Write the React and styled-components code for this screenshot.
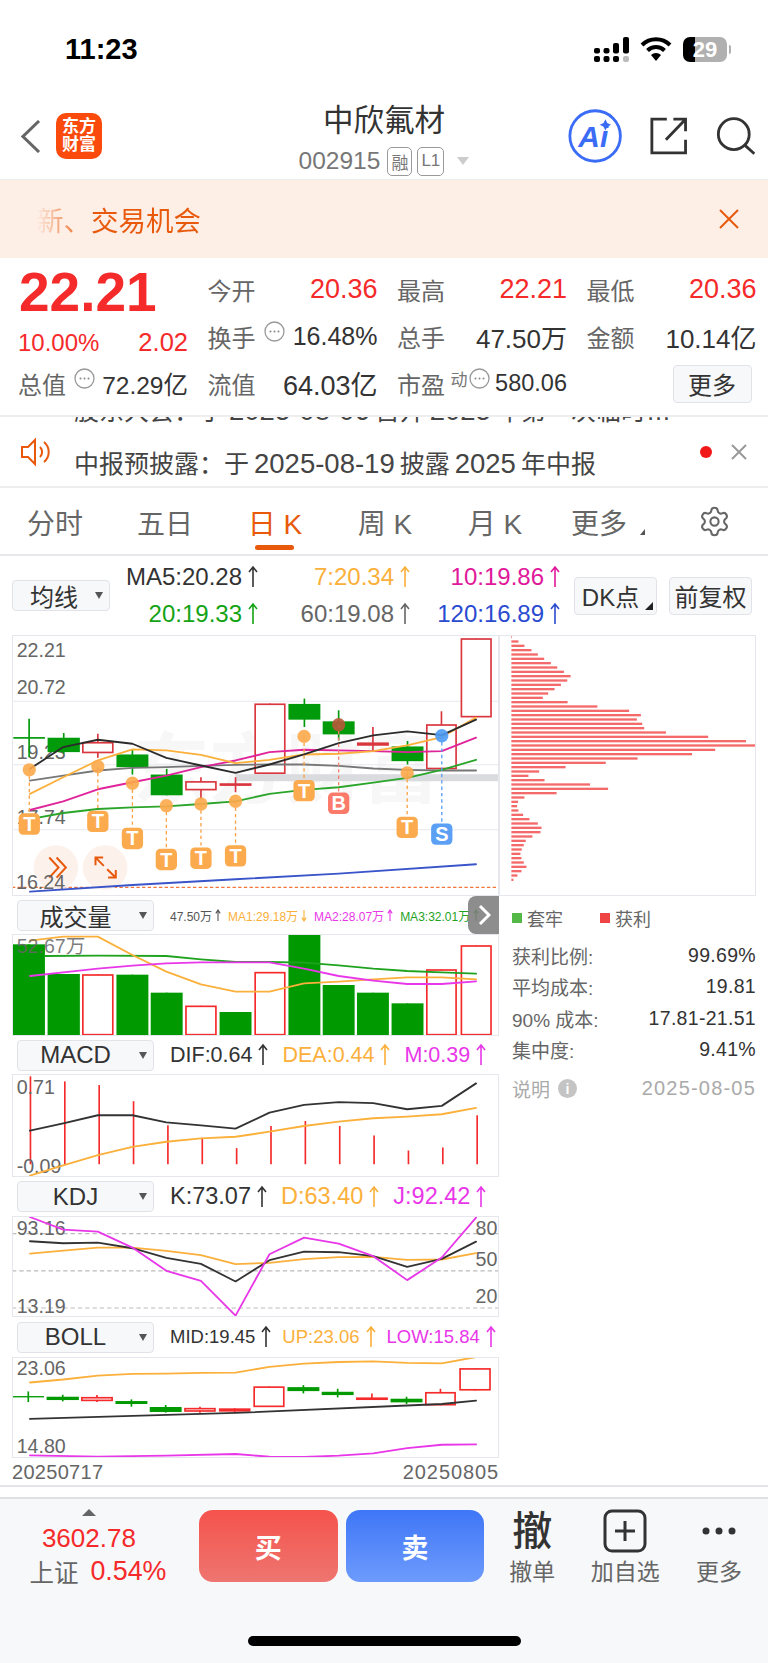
import React from "react";
import styled, { createGlobalStyle } from "styled-components";
import { Settings } from "lucide-react";

const RED = "#f52a2a";
const CANDLE_RED = "#d9363e";
const GREEN = "#009a0a";
const ORANGE = "#e8590c";
const AMBER = "#fbb03b";
const MAGENTA = "#e837e8";
const FONT = '"Liberation Sans", "Noto Sans CJK SC", sans-serif';

const GlobalStyle = createGlobalStyle`
  html, body { margin: 0; padding: 0; background: #fff; }
  body { font-family: ${FONT}; color: #333; }
  * { box-sizing: border-box; }
`;

const Page = styled.div`
  width: 768px;
  height: 1663px;
  display: flex;
  flex-direction: column;
  overflow: hidden;
  background: #fff;
`;

/* status bar */
const StatusBar = styled.div`
  height: 90px;
  padding: 8px 41px 0 65px;
  display: flex;
  align-items: center;
  justify-content: space-between;
`;
const Clock = styled.div`
  font-size: 29px;
  font-weight: 700;
  color: #000;
`;
const StatusIcons = styled.div`
  display: flex;
  align-items: center;
  gap: 11px;
`;
const Battery = styled.div`
  position: relative;
  width: 44px;
  height: 25px;
  border-radius: 7px;
  background: linear-gradient(90deg, #000 0, #000 27%, #b0b0b0 27%, #b0b0b0 100%);
  color: #fff;
  font-size: 22px;
  font-weight: 700;
  line-height: 25px;
  text-align: center;
  &::after {
    content: "";
    position: absolute;
    right: -4px;
    top: 8px;
    width: 2px;
    height: 9px;
    border-radius: 0 2px 2px 0;
    background: #b0b0b0;
  }
`;

/* header */
const Header = styled.div`
  height: 89px;
  display: flex;
  align-items: flex-start;
`;
const HeaderSide = styled.div`
  width: 200px;
  height: 100%;
  display: flex;
  align-items: center;
  justify-content: ${(p) => (p.$right ? "flex-end" : "flex-start")};
  gap: ${(p) => (p.$right ? "28px" : "15px")};
  padding: ${(p) => (p.$right ? "3px 13px 0 0" : "3px 0 0 21px")};
`;
const HeaderCenter = styled.div`
  flex: 1;
  display: flex;
  flex-direction: column;
  align-items: center;
  padding-top: 12px;
`;
const Title = styled.div`
  font-size: 30.5px;
  line-height: 36px;
  color: #333;
`;
const CodeRow = styled.div`
  display: flex;
  align-items: center;
  margin-top: 7px;
  height: 32px;
  color: #777;
  font-size: 24.5px;
`;
const CodeTag = styled.span`
  width: ${(p) => p.$w}px;
  height: 29px;
  margin-left: ${(p) => p.$ml}px;
  border: 1px solid #999;
  border-radius: 5px;
  font-size: 17px;
  color: #777;
  display: flex;
  align-items: center;
  justify-content: center;
`;
const Caret = styled.span`
  margin-left: 13px;
  border-left: 6px solid transparent;
  border-right: 6px solid transparent;
  border-top: 8px solid #ccc;
`;
const Logo = styled.div`
  width: 46px;
  height: 46px;
  border-radius: 10px;
  background: #fa4b0c;
  color: #fff;
  font-size: 17px;
  font-weight: 700;
  line-height: 18px;
  text-align: center;
  padding-top: 5px;
`;

/* banner */
const Banner = styled.div`
  height: 79px;
  border-top: 1px solid #eee;
  background: #fdeee6;
  display: flex;
  align-items: center;
  justify-content: space-between;
  padding: 0 28px 0 36px;
`;
const BannerText = styled.span`
  font-size: 27.5px;
  background: linear-gradient(90deg, #fdeee6 0, ${ORANGE} 52px);
  -webkit-background-clip: text;
  background-clip: text;
  color: transparent;
`;

/* stats */
const Stats = styled.div`
  height: 159px;
  padding: 8px 0 0 18px;
  display: grid;
  grid-template-columns: repeat(4, 170px);
  grid-auto-rows: 47px;
  column-gap: 19.5px;
  border-bottom: 2px solid #eee;
`;
const Price = styled.div`
  font-size: 55px;
  font-weight: 700;
  color: ${RED};
  line-height: 52px;
  margin-left: 1px;
`;
const Cell = styled.div`
  display: flex;
  align-items: center;
  justify-content: space-between;
  padding-top: ${(p) => p.$pt || 0}px;
`;
const StatLabel = styled.span`
  font-size: 24px;
  color: #666;
`;
const StatValue = styled.span`
  font-size: ${(p) => p.$size || 27}px;
  color: ${(p) => (p.$red ? RED : "#333")};
`;
const Hint = styled.span`
  display: flex;
  align-items: center;
  gap: 1px;
  margin-top: -10px;
  color: #777;
  font-size: 17px;
`;
const MoreButton = styled.div`
  width: 79px;
  height: 38px;
  margin: 0 5px 0 auto;
  border: 1px solid #e2e3e8;
  border-radius: 4px;
  background: #f7f8fa;
  font-size: 24px;
  color: #333;
  display: flex;
  align-items: center;
  justify-content: center;
`;

/* ticker */
const Ticker = styled.div`
  height: 71px;
  border-bottom: 2px solid #eee;
  display: flex;
  padding-left: 20px;
`;
const TickerBody = styled.div`
  margin-left: 22px;
  width: 626px;
  font-size: 25px;
  color: #444;
`;
const ClippedLine = styled.div`
  height: 8px;
  overflow: hidden;
  white-space: nowrap;
  line-height: 30px;
  & > span {
    display: block;
    margin-top: -21px;
  }
`;
const NoticeLine = styled.div`
  margin-top: 23px;
  line-height: 32px;
  white-space: nowrap;
`;
const Num = styled.span`
  font-size: 27.5px;
  margin: 0 5px;
`;
const TickerTools = styled.div`
  display: flex;
  align-items: center;
  gap: 19px;
  height: 70px;
`;
const RedDot = styled.span`
  width: 12px;
  height: 12px;
  border-radius: 50%;
  background: #f01818;
`;

/* period tabs */
const Tabs = styled.div`
  height: 68px;
  border-bottom: 2px solid #e8e8ec;
  display: flex;
  align-items: center;
`;
const Tab = styled.div`
  position: relative;
  width: 110px;
  height: 100%;
  font-size: 28px;
  color: ${(p) => (p.$active ? ORANGE : "#666")};
  display: flex;
  align-items: center;
  justify-content: center;
  padding: 1px ${(p) => p.$pr || 0}px 0 0;
  &::after {
    content: "";
    display: ${(p) => (p.$active ? "block" : "none")};
    position: absolute;
    left: 35px;
    bottom: 4px;
    width: 39px;
    height: 5px;
    border-radius: 3px;
    background: ${ORANGE};
  }
`;
const MoreCorner = styled.span`
  position: absolute;
  right: 15px;
  top: 41px;
  border-left: 5px solid transparent;
  border-bottom: 6px solid #555;
`;
const GearBox = styled.div`
  flex: 1;
  display: flex;
  justify-content: center;
  color: #666;
`;

/* chart area */
const ChartArea = styled.div`
  height: 931px;
  padding-left: 12px;
  border-bottom: 2px solid #e4e5e9;
`;
const MaBar = styled.div`
  height: 79px;
  display: flex;
  align-items: center;
`;
const Select = styled.div`
  position: relative;
  flex: none;
  width: ${(p) => p.$w}px;
  height: 31px;
  margin-left: ${(p) => p.$ml || 0}px;
  border: 1px solid #e2e3e8;
  border-radius: 4px;
  background: #f7f8fa;
  font-size: 24px;
  color: #333;
  padding-right: ${(p) => p.$pr}px;
  display: flex;
  align-items: center;
  justify-content: center;
  &::after {
    content: "";
    position: absolute;
    right: 6px;
    top: 11px;
    border-left: 4.5px solid transparent;
    border-right: 4.5px solid transparent;
    border-top: 7px solid #555;
  }
`;
const MaGrid = styled.div`
  margin-left: 14px;
  display: grid;
  grid-template-columns: 134px 152px 150px;
  grid-auto-rows: 37px;
  align-items: center;
  justify-items: end;
`;
const Reading = styled.span`
  display: inline-flex;
  align-items: center;
  gap: 6px;
  white-space: nowrap;
  font-size: ${(p) => p.$size || 24}px;
  color: ${(p) => p.$color || "#333"};
`;
const ToolButton = styled.div`
  position: relative;
  width: 83px;
  height: 38px;
  margin-left: ${(p) => p.$ml}px;
  padding-right: ${(p) => (p.$corner ? 10 : 0)}px;
  border: 1px solid #e2e3e8;
  border-radius: 4px;
  background: #f7f8fa;
  font-size: 24px;
  color: #333;
  display: flex;
  align-items: center;
  justify-content: center;
  &::after {
    content: "";
    display: ${(p) => (p.$corner ? "block" : "none")};
    position: absolute;
    right: 3px;
    bottom: 4px;
    border-left: 8px solid transparent;
    border-bottom: 8px solid #222;
  }
`;
const ChartBody = styled.div`
  display: flex;
`;
const LeftColumn = styled.div`
  width: 487px;
`;
const RightColumn = styled.div`
  width: 257px;
`;
const Panel = styled.div`
  height: ${(p) => p.$h}px;
  outline: 1px solid #e6e7ec;
  outline-offset: -1px;
`;
const ChartSvg = styled.svg`
  display: block;
  width: 100%;
  height: 100%;
  overflow: hidden;
`;
const AxisText = styled.text`
  font-family: ${FONT};
  font-size: 59px;
  fill: #666;
`;
const BadgeText = styled.text`
  font-family: ${FONT};
  font-size: 60px;
  font-weight: 700;
  fill: #fff;
  text-anchor: middle;
`;
const Watermark = styled.text`
  font-family: ${FONT};
  font-size: 230px;
  font-weight: 700;
  fill: #f7f7f8;
`;
const IndicatorBar = styled.div`
  position: relative;
  height: ${(p) => p.$h}px;
  display: flex;
  align-items: center;
  gap: ${(p) => p.$gap}px;
  white-space: nowrap;
  overflow: hidden;
`;
const Handle = styled.div`
  position: absolute;
  right: 0;
  top: 0;
  width: 31px;
  height: 38px;
  border-radius: 8px 0 0 8px;
  background: rgba(125, 125, 125, 0.88);
  display: flex;
  align-items: center;
  justify-content: center;
`;
const DateRow = styled.div`
  height: 29px;
  display: flex;
  align-items: center;
  justify-content: space-between;
  font-size: 20px;
  color: #666;
`;
const DateText = styled.span`
  letter-spacing: ${(p) => p.$ls}px;
`;

/* chip column */
const Legend = styled.div`
  height: 44px;
  padding-left: 13px;
  display: flex;
  align-items: center;
  gap: 5px;
  font-size: 18px;
  color: #666;
`;
const Swatch = styled.span`
  width: 10px;
  height: 10px;
  margin-left: ${(p) => p.$ml || 0}px;
  background: ${(p) => p.$color};
`;
const ChipRow = styled.div`
  height: 31.3px;
  padding-left: 13px;
  display: flex;
  align-items: center;
  justify-content: space-between;
  font-size: 19px;
  color: #666;
`;
const ChipValue = styled.span`
  font-size: ${(p) => (p.$muted ? 20 : 19.5)}px;
  letter-spacing: ${(p) => (p.$muted ? 1.2 : 0.3)}px;
  color: ${(p) => (p.$muted ? "#aaa" : "#333")};
`;
const NoteRow = styled(ChipRow)`
  margin-top: 8px;
  color: #aaa;
`;
const NoteLabel = styled.span`
  display: flex;
  align-items: center;
  gap: 8px;
`;
const InfoDot = styled.span`
  width: 19px;
  height: 19px;
  border-radius: 50%;
  background: #c4c4c4;
  color: #fff;
  font-size: 14px;
  font-weight: 700;
  display: flex;
  align-items: center;
  justify-content: center;
`;

/* bottom bar */
const Strip = styled.div`
  height: 12px;
  flex: none;
  border-bottom: 2px solid #e0e1e6;
`;
const BottomBar = styled.div`
  flex: 1;
  background: #f7f8fa;
  display: flex;
  flex-direction: column;
`;
const BottomRow = styled.div`
  display: flex;
  align-items: flex-start;
  padding-top: 10px;
`;
const Quote = styled.div`
  width: 178px;
  margin-right: 21px;
  display: flex;
  flex-direction: column;
  align-items: center;
`;
const QuoteCaret = styled.span`
  border-left: 7px solid transparent;
  border-right: 7px solid transparent;
  border-bottom: 7px solid #666;
`;
const QuoteNumber = styled.div`
  margin-top: 7px;
  font-size: 26px;
  line-height: 30px;
  color: ${RED};
`;
const QuoteLine = styled.div`
  display: flex;
  align-items: center;
  gap: 12px;
  height: 36px;
  margin-left: 18px;
  font-size: 24.5px;
  color: #666;
`;
const QuoteChange = styled.span`
  font-size: 26.8px;
  color: ${RED};
`;
const TradeButton = styled.div`
  width: 139px;
  height: 72px;
  margin: 1px 8px 0 0;
  border-radius: 14px;
  background: linear-gradient(180deg, ${(p) => p.$from}, ${(p) => p.$to});
  color: #fff;
  font-size: 27px;
  font-weight: 700;
  display: flex;
  align-items: center;
  justify-content: center;
`;
const Tool = styled.div`
  width: ${(p) => p.$w}px;
  margin-left: ${(p) => p.$ml || 0}px;
  display: flex;
  flex-direction: column;
  align-items: center;
  font-size: 23px;
  color: #666;
`;
const ToolGlyph = styled.div`
  height: 44px;
  display: flex;
  align-items: center;
  justify-content: center;
  font-size: 40px;
  font-weight: 500;
  color: #333;
`;
const CancelGlyph = styled.span`
  margin-top: -7px;
`;
const ToolLabel = styled.div`
  margin-top: 4px;
  line-height: 30px;
`;
const HomeIndicator = styled.div`
  width: 273px;
  height: 10px;
  margin: auto auto 17px;
  border-radius: 5px;
  background: #000;
`;

const Arrow = ({ down }) => (
  <svg width="10" height="24" viewBox="0 0 10 24" fill="none" stroke="currentColor" strokeWidth="1.6">
    {down ? (
      <path d="M5 2 V22 M1 17 L5 22 L9 17" />
    ) : (
      <path d="M5 22 V2 M1 7 L5 2 L9 7" />
    )}
  </svg>
);

const SmallArrow = ({ down }) => (
  <svg width="6" height="13" viewBox="0 0 10 24" fill="none" stroke="currentColor" strokeWidth="2">
    {down ? <path d="M5 2 V22 M1 16 L5 22 L9 16" /> : <path d="M5 22 V2 M1 8 L5 2 L9 8" />}
  </svg>
);

const DotCircle = () => (
  <svg width="21" height="21" viewBox="0 0 21 21" fill="none">
    <circle cx="10.5" cy="10.5" r="9.5" stroke="#999" strokeWidth="1.3" />
    <circle cx="6.5" cy="10.5" r="1" fill="#888" />
    <circle cx="10.5" cy="10.5" r="1" fill="#888" />
    <circle cx="14.5" cy="10.5" r="1" fill="#888" />
  </svg>
);

const Line = ({ pts, color, w = 5.5, dash }) => (
  <polyline
    points={pts.map((p) => p.join(",")).join(" ")}
    fill="none"
    stroke={color}
    strokeWidth={w}
    strokeLinejoin="round"
    strokeLinecap="round"
    strokeDasharray={dash}
  />
);

const Candle = ({ c, red = CANDLE_RED, green = GREEN }) => {
  const [x0, x1, top, bottom, wt, wb, kind] = c;
  const color = kind === "g" ? green : red;
  const cx = (x0 + x1) / 2;
  const hollow = kind === "h";
  return (
    <g>
      <line x1={cx} x2={cx} y1={wt} y2={wb} stroke={color} strokeWidth="5" />
      <rect
        x={hollow ? x0 + 2 : x0}
        y={hollow ? top + 2 : top}
        width={hollow ? x1 - x0 - 4 : x1 - x0}
        height={hollow ? bottom - top - 4 : bottom - top}
        fill={hollow ? "#fff" : color}
        stroke={hollow ? color : "none"}
        strokeWidth={hollow ? 5 : 0}
      />
    </g>
  );
};

const Marker = ({ x, cy, by, letter, color, ball, stem }) => (
  <g>
    <line x1={x} x2={x} y1={cy} y2={by} stroke={stem} strokeWidth="4" strokeDasharray="10 9" />
    <circle cx={x} cy={cy} r="20" fill={ball} fillOpacity="0.9" />
    <rect x={x - 32} y={by - 32} width="64" height="64" rx="14" fill={color} />
    <BadgeText x={x} y={by + 21}>{letter}</BadgeText>
  </g>
);

const mainCandles = [
  [40, 135, 530, 535, 475, 590, "g"],
  [143, 240, 532, 575, 518, 580, "g"],
  [247, 341, 545, 578, 520, 592, "h"],
  [350, 446, 582, 620, 568, 642, "g"],
  [453, 549, 642, 704, 625, 704, "g"],
  [557, 651, 662, 689, 650, 715, "h"],
  [660, 756, 668, 676, 650, 695, "r"],
  [765, 858, 430, 640, 430, 640, "h"],
  [867, 963, 431, 478, 415, 500, "g"],
  [970, 1066, 483, 522, 450, 540, "g"],
  [1073, 1169, 546, 556, 500, 570, "r"],
  [1177, 1273, 558, 602, 542, 612, "g"],
  [1281, 1373, 492, 626, 453, 626, "h"],
  [1385, 1478, 235, 471, 235, 471, "h"],
];

const xs = [90, 190, 294, 398, 500, 604, 708, 810, 914, 1018, 1122, 1224, 1328, 1431];
const zip = (ys) => ys.map((y, i) => [xs[i], y]);

const mainLines = [
  { color: "#777", ys: [660, 645, 630, 622, 620, 616, 613, 612, 612, 616, 624, 628, 630, 630] },
  { color: "#2aa52a", ys: [775, 757, 745, 740, 737, 730, 722, 700, 688, 680, 666, 652, 628, 598] },
  { color: "#e0249a", ys: [748, 722, 686, 665, 645, 620, 600, 575, 568, 570, 572, 575, 572, 532] },
  { color: AMBER, ys: [700, 650, 600, 567, 570, 583, 608, 598, 582, 580, 572, 555, 530, 472] },
  { color: "#2b2b2b", ys: [625, 560, 538, 550, 592, 615, 637, 612, 582, 548, 525, 513, 524, 478] },
];

const T = { letter: "T", color: "#fcaa4e", ball: "#fca94a", stem: "#fba344" };
const markers = [
  { x: 88, cy: 628, by: 790, ...T },
  { x: 294, cy: 618, by: 782, ...T },
  { x: 398, cy: 668, by: 833, ...T },
  { x: 500, cy: 735, by: 896, ...T },
  { x: 604, cy: 730, by: 892, ...T },
  { x: 708, cy: 722, by: 885, ...T },
  { x: 914, cy: 528, by: 690, ...T },
  { x: 1018, cy: 493, by: 728, letter: "B", color: "#fb7a6a", ball: "#b8583a", stem: "#f5816f" },
  { x: 1224, cy: 637, by: 800, ...T },
  { x: 1328, cy: 526, by: 820, letter: "S", color: "#5ba0f5", ball: "#4d9bf5", stem: "#5ba0f5" },
];

const MainChart = () => (
  <ChartSvg viewBox="36 225 1464 780" preserveAspectRatio="none">
    <Watermark x="400" y="710">东方财富</Watermark>
    {[423, 613, 807].map((y) => (
      <line key={y} x1="36" x2="1500" y1={y} y2={y} stroke="#e8e8ee" strokeWidth="3" />
    ))}
    <rect x="708" y="641" width="792" height="21" fill="#d9dbdf" />
    <AxisText x="50" y="290">22.21</AxisText>
    <AxisText x="50" y="402">20.72</AxisText>
    <AxisText x="50" y="597">19.23</AxisText>
    <AxisText x="50" y="790">17.74</AxisText>
    {mainCandles.map((c, i) => <Candle key={i} c={c} />)}
    {mainLines.map((l) => <Line key={l.color} pts={zip(l.ys)} color={l.color} />)}
    <line x1="36" x2="1500" y1="979" y2="979" stroke="#f4743a" strokeWidth="4" strokeDasharray="10 7" />
    {markers.map((m) => <Marker key={m.x} {...m} />)}
    <circle cx="168" cy="920" r="67" fill="#fdf0ea" fillOpacity="0.92" />
    <circle cx="316" cy="920" r="67" fill="#fdf0ea" fillOpacity="0.92" />
    <path d="M148 890 L176 920 L148 950 M170 890 L198 920 L170 950" fill="none" stroke={ORANGE} strokeWidth="6" />
    <path d="M287 913 V890 H310 M288 891 L312 915 M348 927 V950 H325 M347 949 L322 925" fill="none" stroke={ORANGE} strokeWidth="6" />
    <AxisText x="48" y="985">16.24</AxisText>
    <Line pts={[[90, 992], [398, 972], [708, 955], [1018, 938], [1431, 910]]} color="#3a54c9" />
  </ChartSvg>
);

const volumeBars = [
  [38, 135, 163, "g"], [143, 240, 252, "g"], [247, 341, 253, "h"], [350, 446, 254, "g"],
  [453, 549, 308, "g"], [557, 651, 347, "h"], [660, 756, 366, "g"], [765, 858, 246, "h"],
  [867, 963, 134, "g"], [970, 1066, 285, "g"], [1073, 1169, 308, "g"], [1177, 1273, 340, "g"],
  [1281, 1373, 238, "h"], [1385, 1478, 166, "h"],
];

const VolumeChart = () => (
  <ChartSvg viewBox="36 132 1464 306" preserveAspectRatio="none">
    {volumeBars.map(([x0, x1, top, kind]) => (
      <Candle key={x0} c={[x0, x1, top, 436, top, 436, kind]} red={RED} green="#009a00" />
    ))}
    <Line pts={[[135, 198], [294, 197], [500, 198], [604, 208], [708, 216], [810, 216], [914, 218], [1018, 226], [1122, 236], [1224, 243], [1328, 247], [1431, 251]]} color="#1fa31f" />
    <Line pts={zip([152, 140, 140, 195, 245, 283, 305, 305, 280, 275, 268, 262, 262, 268])} color={AMBER} />
    <Line pts={zip([258, 247, 236, 227, 220, 217, 217, 217, 236, 258, 272, 282, 282, 274])} color={MAGENTA} />
    <AxisText x="50" y="190" fillOpacity="0.85">52.67万</AxisText>
  </ChartSvg>
);

const macdBars = [560, 575, 586, 634, 706, 743, 774, 708, 693, 708, 736, 781, 772, 676];

const MacdChart = () => (
  <ChartSvg viewBox="36 553 1464 307" preserveAspectRatio="none">
    {macdBars.map((top, i) => {
      const x = 91.5 + i * 103.3;
      return <line key={i} x1={x} x2={x} y1={top} y2="822" stroke={RED} strokeWidth="5" />;
    })}
    <AxisText x="50" y="612">0.71</AxisText>
    <AxisText x="50" y="848">-0.09</AxisText>
    <Line pts={zip([722, 700, 676, 676, 697, 706, 716, 668, 645, 637, 640, 658, 648, 581])} color="#333" />
    <Line pts={zip([856, 825, 795, 770, 755, 745, 740, 725, 708, 695, 685, 680, 673, 654])} color={AMBER} />
  </ChartSvg>
);

const KdjChart = () => (
  <ChartSvg viewBox="36 137 1464 304" preserveAspectRatio="none">
    {[190, 302, 414].map((y) => (
      <line key={y} x1="36" x2="1500" y1={y} y2={y} stroke="#bbb" strokeWidth="3.5" strokeDasharray="13 9" />
    ))}
    <AxisText x="50" y="193">93.16</AxisText>
    <AxisText x="50" y="428">13.19</AxisText>
    <AxisText x="1495" y="193" textAnchor="end">80</AxisText>
    <AxisText x="1495" y="287" textAnchor="end">50</AxisText>
    <AxisText x="1495" y="400" textAnchor="end">20</AxisText>
    <Line pts={zip([250, 241, 232, 232, 242, 255, 282, 278, 267, 261, 260, 269, 268, 249])} color={AMBER} />
    <Line pts={zip([213, 219, 217, 234, 263, 281, 334, 270, 244, 246, 258, 290, 266, 214])} color="#333" />
    <Line pts={zip([140, 178, 184, 232, 302, 332, 437, 252, 202, 220, 258, 330, 262, 142])} color={MAGENTA} />
  </ChartSvg>
);

const bollCandles = [
  [38, 132, 678, 682, 664, 696, "g"],
  [140, 237, 680, 690, 674, 694, "g"],
  [244, 339, 681, 693, 675, 696, "h"],
  [347, 443, 693, 702, 688, 710, "g"],
  [450, 546, 711, 726, 705, 728, "g"],
  [554, 648, 714, 725, 710, 728, "h"],
  [658, 753, 715, 725, 715, 728, "r"],
  [762, 855, 649, 711, 649, 711, "h"],
  [864, 960, 651, 663, 645, 670, "g"],
  [967, 1063, 665, 675, 656, 682, "g"],
  [1070, 1166, 682, 690, 670, 690, "r"],
  [1174, 1270, 686, 697, 680, 702, "g"],
  [1278, 1370, 666, 706, 656, 706, "h"],
  [1381, 1475, 594, 661, 594, 661, "h"],
];

const BollChart = () => (
  <ChartSvg viewBox="36 560 1464 305" preserveAspectRatio="none">
    <AxisText x="50" y="615">23.06</AxisText>
    <AxisText x="50" y="850">14.80</AxisText>
    <Line pts={zip([637, 628, 616, 611, 610, 608, 607, 590, 580, 575, 573, 578, 579, 560])} color={AMBER} />
    {bollCandles.map((c, i) => <Candle key={i} c={c} red={RED} green="#009a00" />)}
    <Line pts={[[90, 747], [708, 729], [1328, 702], [1431, 692]]} color="#333" />
    <Line pts={[[90, 857], [294, 861], [500, 858], [708, 853], [810, 861], [914, 862], [1018, 858], [1122, 851], [1224, 835], [1328, 825], [1431, 824]]} color={MAGENTA} />
  </ChartSvg>
);

const chipEnds = [
  68, 87, 105, 126, 145, 164, 184, 203, 223, 243, 233, 214, 195, 176, 160, 234, 323, 418, 453,
  441, 457, 463, 528, 654, 767, 797, 675, 606, 443, 348, 228, 149, 117, 165, 301, 355, 201, 105,
  86, 83, 87, 101, 120, 145, 156, 153, 129, 109, 103, 97, 93, 96, 103, 111, 96, 84, 72,
];

const ChipChart = () => (
  <ChartSvg viewBox="29 45 768 783" preserveAspectRatio="none">
    {chipEnds.map((end, i) => (
      <rect key={i} x="66" y={48 + i * 13} width={end - 66} height="7" fill="#f46a6a" />
    ))}
  </ChartSvg>
);

export default function App() {
  return (
    <Page>
      <GlobalStyle />
      <StatusBar>
        <Clock>11:23</Clock>
        <StatusIcons>
          <svg width="35" height="25" viewBox="0 0 35 25" fill="#000">
            <rect x="0" y="11" width="6" height="5.5" rx="2" />
            <rect x="0" y="19" width="6" height="6" rx="2" />
            <rect x="9.5" y="11" width="6" height="5.5" rx="2" />
            <rect x="9.5" y="19" width="6" height="6" rx="2" />
            <rect x="19" y="6" width="6" height="10.5" rx="2" />
            <rect x="19" y="19" width="6" height="6" rx="2" />
            <rect x="29" y="0" width="6" height="16.5" rx="2" />
            <rect x="29" y="19" width="6" height="6" rx="2" fill="#bbb" />
          </svg>
          <svg width="32" height="24" viewBox="0 0 32 24" fill="none" stroke="#000" strokeWidth="4">
            <path d="M2 8 A20 20 0 0 1 30 8" />
            <path d="M7.5 13.5 A12 12 0 0 1 24.5 13.5" />
            <path d="M16 24 L11 18 A7 7 0 0 1 21 18 Z" fill="#000" stroke="none" />
          </svg>
          <Battery>29</Battery>
        </StatusIcons>
      </StatusBar>

      <Header>
        <HeaderSide>
          <svg width="20" height="33" viewBox="0 0 20 33" fill="none" stroke="#666" strokeWidth="3">
            <polyline points="18,1 2,16.5 18,32" />
          </svg>
          <Logo>东方<br />财富</Logo>
        </HeaderSide>
        <HeaderCenter>
          <Title>中欣氟材</Title>
          <CodeRow>
            002915
            <CodeTag $w={25} $ml={7}>融</CodeTag>
            <CodeTag $w={27} $ml={5}>L1</CodeTag>
            <Caret />
          </CodeRow>
        </HeaderCenter>
        <HeaderSide $right>
          <svg width="58" height="58" viewBox="0 0 58 58" fill="none">
            <circle cx="29" cy="29" r="27" stroke="#3b6cf6" strokeWidth="3" />
            <text x="11" y="41" fontFamily={FONT} fontSize="32" fontWeight="700" fontStyle="italic" fill="#3b6cf6">Ai</text>
            <path d="M40 11 L42 15 L46 17 L42 19 L40 23 L38 19 L34 17 L38 15 Z" fill="#3b6cf6" />
          </svg>
          <svg width="40" height="40" viewBox="0 0 40 40" fill="none" stroke="#333" strokeWidth="3">
            <path d="M18 2 H2 V38 H38 V24" />
            <path d="M17 24 L38 2 M25 2 H38 V15" />
          </svg>
          <svg width="42" height="40" viewBox="0 0 42 40" fill="none" stroke="#333" strokeWidth="3">
            <circle cx="19" cy="18" r="16.5" />
            <path d="M31 30 L41 39" />
          </svg>
        </HeaderSide>
      </Header>

      <Banner>
        <BannerText>新、交易机会</BannerText>
        <svg width="22" height="22" viewBox="0 0 22 22" stroke={ORANGE} strokeWidth="2">
          <path d="M2 2 L20 20 M20 2 L2 20" />
        </svg>
      </Banner>

      <Stats>
        <Price>22.21</Price>
        <Cell><StatLabel>今开</StatLabel><StatValue $red>20.36</StatValue></Cell>
        <Cell><StatLabel>最高</StatLabel><StatValue $red>22.21</StatValue></Cell>
        <Cell><StatLabel>最低</StatLabel><StatValue $red>20.36</StatValue></Cell>

        <Cell $pt={12}><StatValue $red $size={24}>10.00%</StatValue><StatValue $red $size={25.5}>2.02</StatValue></Cell>
        <Cell><StatLabel>换手</StatLabel><Hint><DotCircle /></Hint><StatValue $size={25}>16.48%</StatValue></Cell>
        <Cell><StatLabel>总手</StatLabel><StatValue $size={26}>47.50万</StatValue></Cell>
        <Cell><StatLabel>金额</StatLabel><StatValue $size={26}>10.14亿</StatValue></Cell>

        <Cell><StatLabel>总值</StatLabel><Hint><DotCircle /></Hint><StatValue $size={24.5}>72.29亿</StatValue></Cell>
        <Cell><StatLabel>流值</StatLabel><StatValue $size={27}>64.03亿</StatValue></Cell>
        <Cell><StatLabel>市盈</StatLabel><Hint>动<DotCircle /></Hint><StatValue $size={23.5}>580.06</StatValue></Cell>
        <Cell><MoreButton>更多</MoreButton></Cell>
      </Stats>

      <Ticker>
        <svg width="32" height="30" viewBox="0 0 32 30" fill="none" stroke={ORANGE} strokeWidth="2" style={{ marginTop: 20 }}>
          <path d="M2 10 H8 L15 3 V27 L8 20 H2 Z" />
          <path d="M20 10 A7 7 0 0 1 20 20" />
          <path d="M24 5 A13 13 0 0 1 24 25" />
        </svg>
        <TickerBody>
          <ClippedLine>
            <span>股东大会：于<Num>2025-08-06</Num>召开<Num>2025</Num>年第一次临时…</span>
          </ClippedLine>
          <NoticeLine>中报预披露：于<Num>2025-08-19</Num>披露<Num>2025</Num>年中报</NoticeLine>
        </TickerBody>
        <TickerTools>
          <RedDot />
          <svg width="16" height="16" viewBox="0 0 16 16" stroke="#999" strokeWidth="2">
            <path d="M1 1 L15 15 M15 1 L1 15" />
          </svg>
        </TickerTools>
      </Ticker>

      <Tabs>
        <Tab>分时</Tab>
        <Tab>五日</Tab>
        <Tab $active>日 K</Tab>
        <Tab>周 K</Tab>
        <Tab>月 K</Tab>
        <Tab $pr={12}>更多<MoreCorner /></Tab>
        <GearBox><Settings size={33} strokeWidth={1.5} /></GearBox>
      </Tabs>

      <ChartArea>
        <MaBar>
          <Select $w={98} $pr={14}>均线</Select>
          <MaGrid>
            <Reading>MA5:20.28<Arrow /></Reading>
            <Reading $color={AMBER}>7:20.34<Arrow /></Reading>
            <Reading $color="#e0189a">10:19.86<Arrow /></Reading>
            <Reading $color="#14a314">20:19.33<Arrow /></Reading>
            <Reading $color="#666">60:19.08<Arrow /></Reading>
            <Reading $color="#2a4bd0">120:16.89<Arrow /></Reading>
          </MaGrid>
          <ToolButton $ml={14} $corner>DK点</ToolButton>
          <ToolButton $ml={12}>前复权</ToolButton>
        </MaBar>

        <ChartBody>
          <LeftColumn>
            <Panel $h={261}><MainChart /></Panel>

            <IndicatorBar $h={38} $gap={7}>
              <Select $w={137} $ml={5} $pr={20}>成交量</Select>
              <Reading $size={12} $color="#555" style={{ gap: 3, marginLeft: 9 }}>47.50万<SmallArrow /></Reading>
              <Reading $size={12} $color={AMBER} style={{ gap: 3 }}>MA1:29.18万<SmallArrow down /></Reading>
              <Reading $size={12} $color={MAGENTA} style={{ gap: 3 }}>MA2:28.07万<SmallArrow /></Reading>
              <Reading $size={12} $color="#1fa31f" style={{ gap: 3 }}>MA3:32.01万<SmallArrow /></Reading>
              <Handle>
                <svg width="14" height="22" viewBox="0 0 14 22" fill="none" stroke="#fff" strokeWidth="3">
                  <polyline points="3,2 12,11 3,20" />
                </svg>
              </Handle>
            </IndicatorBar>
            <Panel $h={102}><VolumeChart /></Panel>

            <IndicatorBar $h={38} $gap={14}>
              <Select $w={137} $ml={5} $pr={20}>MACD</Select>
              <Reading $size={21.5} style={{ marginLeft: 2 }}>DIF:0.64<Arrow /></Reading>
              <Reading $size={21.5} $color={AMBER}>DEA:0.44<Arrow /></Reading>
              <Reading $size={21.5} $color={MAGENTA}>M:0.39<Arrow /></Reading>
            </IndicatorBar>
            <Panel $h={103}><MacdChart /></Panel>

            <IndicatorBar $h={39} $gap={14}>
              <Select $w={137} $ml={5} $pr={20}>KDJ</Select>
              <Reading $size={23.5} style={{ marginLeft: 2 }}>K:73.07<Arrow /></Reading>
              <Reading $size={23.5} $color={AMBER}>D:63.40<Arrow /></Reading>
              <Reading $size={23.5} $color={MAGENTA}>J:92.42<Arrow /></Reading>
            </IndicatorBar>
            <Panel $h={101}><KdjChart /></Panel>

            <IndicatorBar $h={40} $gap={11}>
              <Select $w={137} $ml={5} $pr={20}>BOLL</Select>
              <Reading $size={18.5} style={{ marginLeft: 5 }}>MID:19.45<Arrow /></Reading>
              <Reading $size={18.5} $color={AMBER}>UP:23.06<Arrow /></Reading>
              <Reading $size={18.5} $color={MAGENTA}>LOW:15.84<Arrow /></Reading>
            </IndicatorBar>
            <Panel $h={101}><BollChart /></Panel>

            <DateRow>
              <DateText $ls={0.3}>20250717</DateText>
              <DateText $ls={0.9}>20250805</DateText>
            </DateRow>
          </LeftColumn>

          <RightColumn>
            <Panel $h={261}><ChipChart /></Panel>
            <Legend>
              <Swatch $color="#55b947" />套牢
              <Swatch $color="#ee4444" $ml={32} />获利
            </Legend>
            <ChipRow>获利比例:<ChipValue>99.69%</ChipValue></ChipRow>
            <ChipRow>平均成本:<ChipValue>19.81</ChipValue></ChipRow>
            <ChipRow>90% 成本:<ChipValue>17.81-21.51</ChipValue></ChipRow>
            <ChipRow>集中度:<ChipValue>9.41%</ChipValue></ChipRow>
            <NoteRow>
              <NoteLabel>说明<InfoDot>i</InfoDot></NoteLabel>
              <ChipValue $muted>2025-08-05</ChipValue>
            </NoteRow>
          </RightColumn>
        </ChartBody>
      </ChartArea>

      <Strip />

      <BottomBar>
        <BottomRow>
          <Quote>
            <QuoteCaret />
            <QuoteNumber>3602.78</QuoteNumber>
            <QuoteLine>上证<QuoteChange>0.54%</QuoteChange></QuoteLine>
          </Quote>
          <TradeButton $from="#f5534c" $to="#ee7570">买</TradeButton>
          <TradeButton $from="#3f76f7" $to="#6d9bfc">卖</TradeButton>
          <Tool $w={96} $ml={-8}>
            <ToolGlyph><CancelGlyph>撤</CancelGlyph></ToolGlyph>
            <ToolLabel>撤单</ToolLabel>
          </Tool>
          <Tool $w={90}>
            <ToolGlyph>
              <svg width="44" height="44" viewBox="0 0 44 44" fill="none" stroke="#333" strokeWidth="3">
                <rect x="2" y="2" width="40" height="40" rx="7" />
                <path d="M22 12 V32 M12 22 H32" />
              </svg>
            </ToolGlyph>
            <ToolLabel>加自选</ToolLabel>
          </Tool>
          <Tool $w={98}>
            <ToolGlyph>
              <svg width="34" height="8" viewBox="0 0 34 8" fill="#333">
                <circle cx="4" cy="4" r="3.5" />
                <circle cx="17" cy="4" r="3.5" />
                <circle cx="30" cy="4" r="3.5" />
              </svg>
            </ToolGlyph>
            <ToolLabel>更多</ToolLabel>
          </Tool>
        </BottomRow>
        <HomeIndicator />
      </BottomBar>
    </Page>
  );
}
